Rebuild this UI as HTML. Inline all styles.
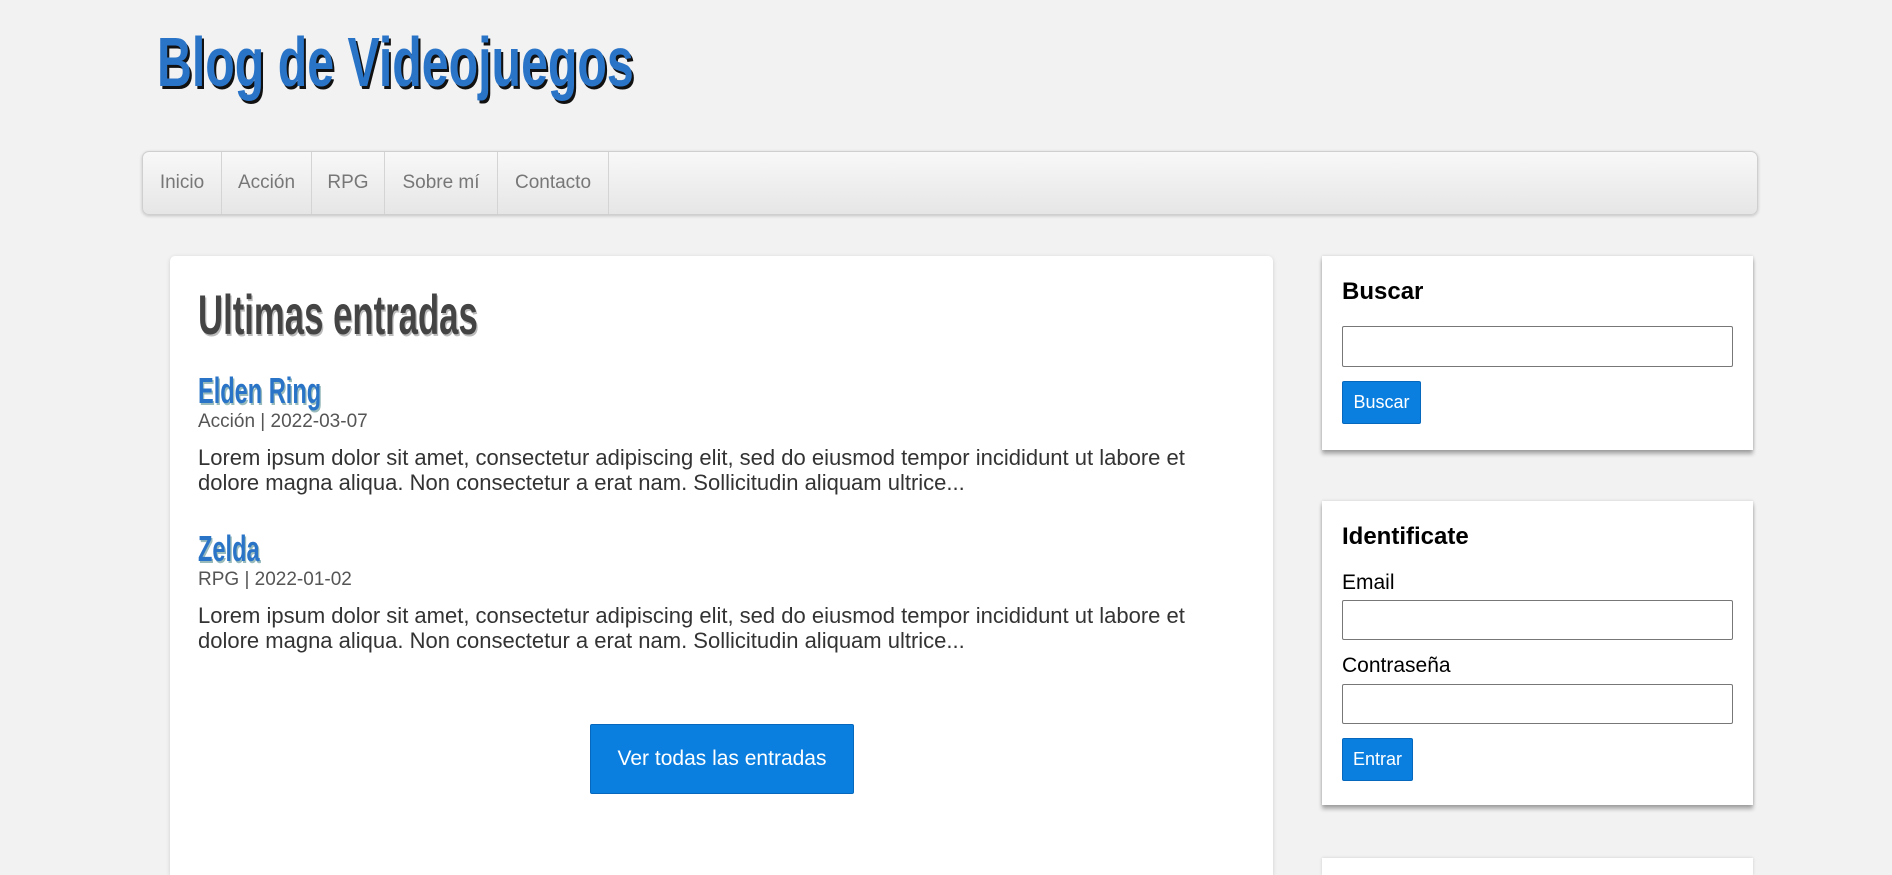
<!DOCTYPE html>
<html><head><meta charset="utf-8"><style>
html,body{margin:0;padding:0;overflow:hidden;height:875px}
body{width:1892px;height:875px;overflow:hidden;background:#f2f2f2;font-family:"Liberation Sans",Arial,sans-serif;position:relative}
.cond{display:inline-block;font-weight:bold;transform-origin:0 0;white-space:nowrap}
#title{position:absolute;left:157px;top:22px;font-size:70px;color:#2a74c8;text-shadow:3px 3px 0 #111;transform:scaleX(0.69)}
#nav{position:absolute;left:142px;top:151px;width:1614px;height:62px;border:1px solid #cfcfcf;border-radius:7px;background:linear-gradient(#f8f8f8,#e6e6e6);box-shadow:0 1px 3px rgba(0,0,0,.2)}
#nav span{position:absolute;top:0;height:62px;line-height:62px;font-size:19px;color:#777;border-right:1px solid #d4d4d4;text-align:center}
.card{position:absolute;background:#fff;border-radius:5px 5px 0 0;box-shadow:0 1px 4px rgba(0,0,0,.15)}
.side{position:absolute;background:#fff;box-shadow:0 4px 4px rgba(0,0,0,.3),0 0 3px rgba(0,0,0,.15)}
.post-t{position:absolute;left:28px;font-size:36px;color:#2a74c8;text-shadow:2px 2px 0 #9bb;transform:scaleX(0.655)}
.meta{position:absolute;left:28px;font-size:19px;color:#555}
.txt{position:absolute;left:28px;width:1010px;font-size:22px;line-height:25px;color:#333}
.btn{position:absolute;background:#0a7fe0;color:#fff;border:1px solid #0568bd;border-radius:2px;text-align:center}
.inp{position:absolute;left:20px;width:389px;border:1px solid #777;border-radius:2px;background:#fff}
.h3{position:absolute;left:20px;font-size:24px;font-weight:bold;color:#000}
.lbl{position:absolute;left:20px;font-size:21px;color:#000}
</style></head><body>
<div id="title" class="cond">Blog de Videojuegos</div>
<div id="nav">
<span style="left:0;width:78px">Inicio</span>
<span style="left:79px;width:89px">Acción</span>
<span style="left:169px;width:72px">RPG</span>
<span style="left:242px;width:112px">Sobre mí</span>
<span style="left:355px;width:110px">Contacto</span>
</div>
<div class="card" style="left:170px;top:256px;width:1103px;height:619px">
<div class="cond" style="position:absolute;left:28px;top:26px;font-size:56px;color:#444;text-shadow:2px 2px 0 #bbb;transform:scaleX(0.62)">Ultimas entradas</div>
<div class="post-t cond" style="top:114px">Elden Ring</div>
<div class="meta" style="top:155px">Acción | 2022-03-07</div>
<div class="txt" style="top:189px">Lorem ipsum dolor sit amet, consectetur adipiscing elit, sed do eiusmod tempor incididunt ut labore et dolore magna aliqua. Non consectetur a erat nam. Sollicitudin aliquam ultrice...</div>
<div class="post-t cond" style="top:272px">Zelda</div>
<div class="meta" style="top:313px">RPG | 2022-01-02</div>
<div class="txt" style="top:347px">Lorem ipsum dolor sit amet, consectetur adipiscing elit, sed do eiusmod tempor incididunt ut labore et dolore magna aliqua. Non consectetur a erat nam. Sollicitudin aliquam ultrice...</div>
<div class="btn" style="left:420px;top:468px;width:262px;height:68px;line-height:68px;font-size:21px">Ver todas las entradas</div>
</div>
<div class="side" style="left:1322px;top:256px;width:431px;height:194px">
<div class="h3" style="top:22px">Buscar</div>
<div class="inp" style="top:70px;height:39px"></div>
<div class="btn" style="left:20px;top:125px;width:77px;height:41px;line-height:41px;font-size:18px">Buscar</div>
</div>
<div class="side" style="left:1322px;top:501px;width:431px;height:304px">
<div class="h3" style="top:22px">Identificate</div>
<div class="lbl" style="top:70px">Email</div>
<div class="inp" style="top:99px;height:38px"></div>
<div class="lbl" style="top:153px">Contraseña</div>
<div class="inp" style="top:183px;height:38px"></div>
<div class="btn" style="left:20px;top:237px;width:69px;height:41px;line-height:41px;font-size:18px">Entrar</div>
</div>
<div class="side" style="left:1322px;top:858px;width:431px;height:17px;box-shadow:0 0 3px rgba(0,0,0,.15)"></div>
</body></html>
